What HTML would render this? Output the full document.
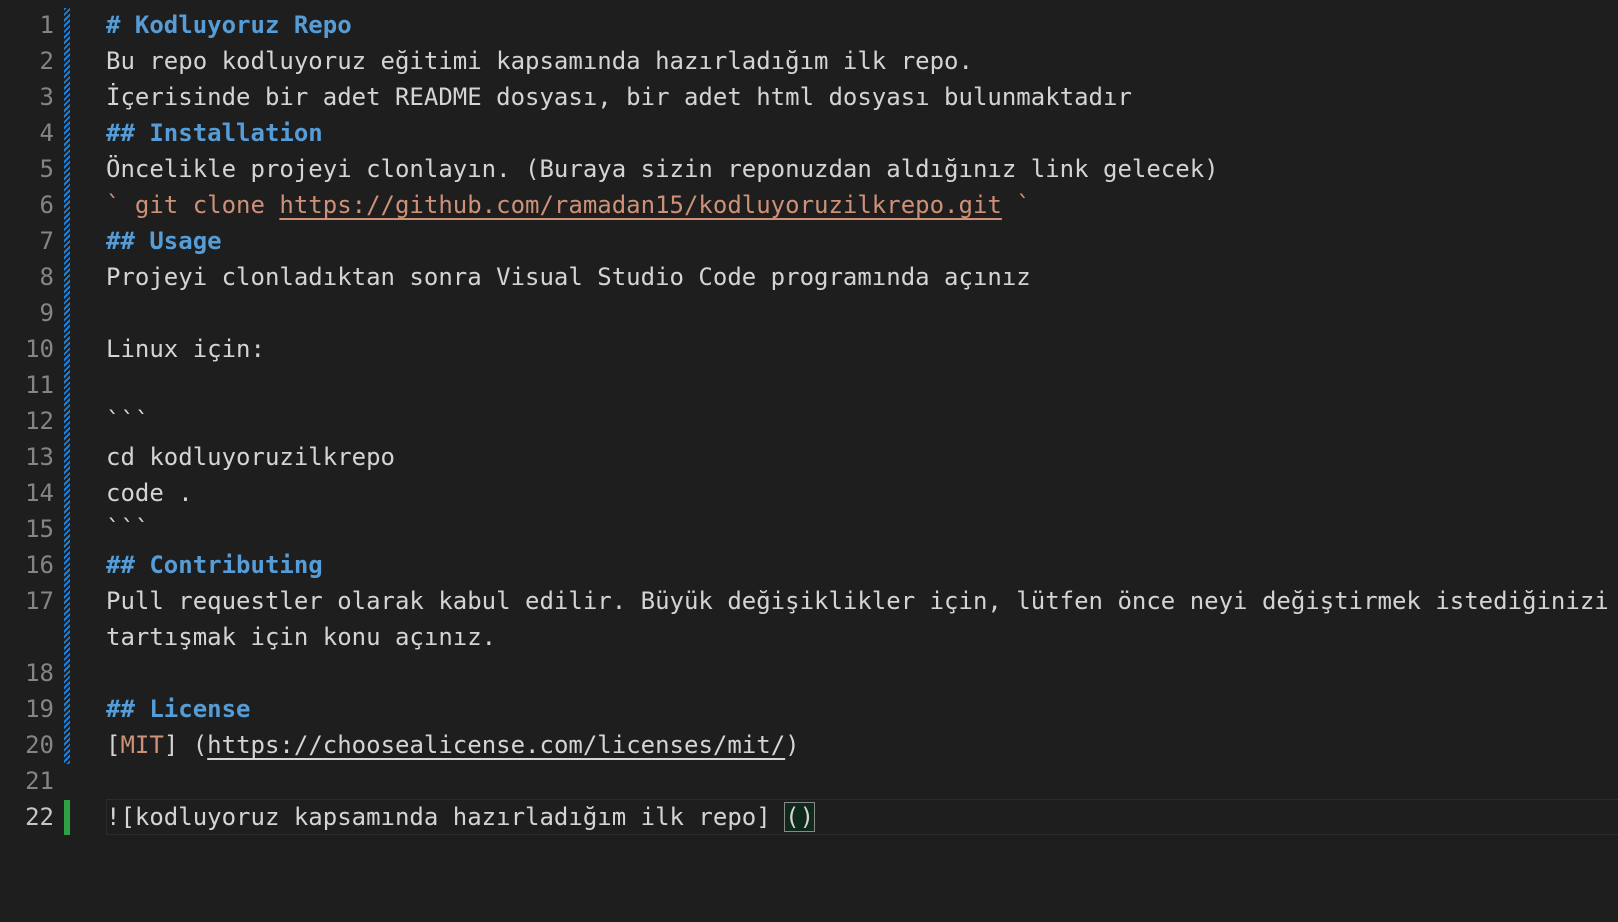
<!DOCTYPE html>
<html><head><meta charset="utf-8"><style>
html,body{margin:0;padding:0;background:#1e1e1e;width:1618px;height:922px;overflow:hidden}
body{font-family:"DejaVu Sans Mono","Liberation Mono",monospace;font-size:24px;color:#d4d4d4}
.r{position:absolute;left:106px;height:36px;line-height:36px;white-space:pre}
.n{position:absolute;left:0;width:54px;text-align:right;height:36px;line-height:36px;color:#858585}
.h{color:#569cd6;font-weight:bold}
.o{color:#ce9178}
.u{text-decoration:underline;text-underline-offset:5px;text-decoration-thickness:2px}
</style></head><body>
<div style="position:absolute;left:64px;top:8px;width:6px;height:756px;background:repeating-linear-gradient(135deg,#1b81e0 0 2px,#1e1e1e 2px 4px)"></div>
<div style="position:absolute;left:64px;top:800px;width:6px;height:35px;background:#2ea043"></div>
<div style="position:absolute;left:106px;top:799px;right:0;height:34px;border:1px solid #2c2c2c;border-right:none"></div>

<div class="n" style="top:7px">1</div><div class="r h" style="top:7px"># Kodluyoruz Repo</div>
<div class="n" style="top:43px">2</div><div class="r" style="top:43px">Bu repo kodluyoruz eğitimi kapsamında hazırladığım ilk repo.</div>
<div class="n" style="top:79px">3</div><div class="r" style="top:79px">İçerisinde bir adet README dosyası, bir adet html dosyası bulunmaktadır</div>
<div class="n" style="top:115px">4</div><div class="r h" style="top:115px">## Installation</div>
<div class="n" style="top:151px">5</div><div class="r" style="top:151px">Öncelikle projeyi clonlayın. (Buraya sizin reponuzdan aldığınız link gelecek)</div>
<div class="n" style="top:187px">6</div><div class="r o" style="top:187px">&#96; git clone <span class="u">https://github.com/ramadan15/kodluyoruzilkrepo.git</span> &#96;</div>
<div class="n" style="top:223px">7</div><div class="r h" style="top:223px">## Usage</div>
<div class="n" style="top:259px">8</div><div class="r" style="top:259px">Projeyi clonladıktan sonra Visual Studio Code programında açınız</div>
<div class="n" style="top:295px">9</div>
<div class="n" style="top:331px">10</div><div class="r" style="top:331px">Linux için:</div>
<div class="n" style="top:367px">11</div>
<div class="n" style="top:403px">12</div><div class="r" style="top:403px">&#96;&#96;&#96;</div>
<div class="n" style="top:439px">13</div><div class="r" style="top:439px">cd kodluyoruzilkrepo</div>
<div class="n" style="top:475px">14</div><div class="r" style="top:475px">code .</div>
<div class="n" style="top:511px">15</div><div class="r" style="top:511px">&#96;&#96;&#96;</div>
<div class="n" style="top:547px">16</div><div class="r h" style="top:547px">## Contributing</div>
<div class="n" style="top:583px">17</div><div class="r" style="top:583px">Pull requestler olarak kabul edilir. Büyük değişiklikler için, lütfen önce neyi değiştirmek istediğinizi</div>
<div class="r" style="top:619px">tartışmak için konu açınız.</div>
<div class="n" style="top:655px">18</div>
<div class="n" style="top:691px">19</div><div class="r h" style="top:691px">## License</div>
<div class="n" style="top:727px">20</div><div class="r" style="top:727px">[<span class="o">MIT</span>] (<span class="u">https://choosealicense.com/licenses/mit/</span>)</div>
<div class="n" style="top:763px">21</div>
<div class="n" style="top:799px;color:#c6c6c6">22</div><div class="r" style="top:799px">![kodluyoruz kapsamında hazırladığım ilk repo] <span style="outline:1px solid #888;background:#0f2a1a">()</span></div>
</body></html>
